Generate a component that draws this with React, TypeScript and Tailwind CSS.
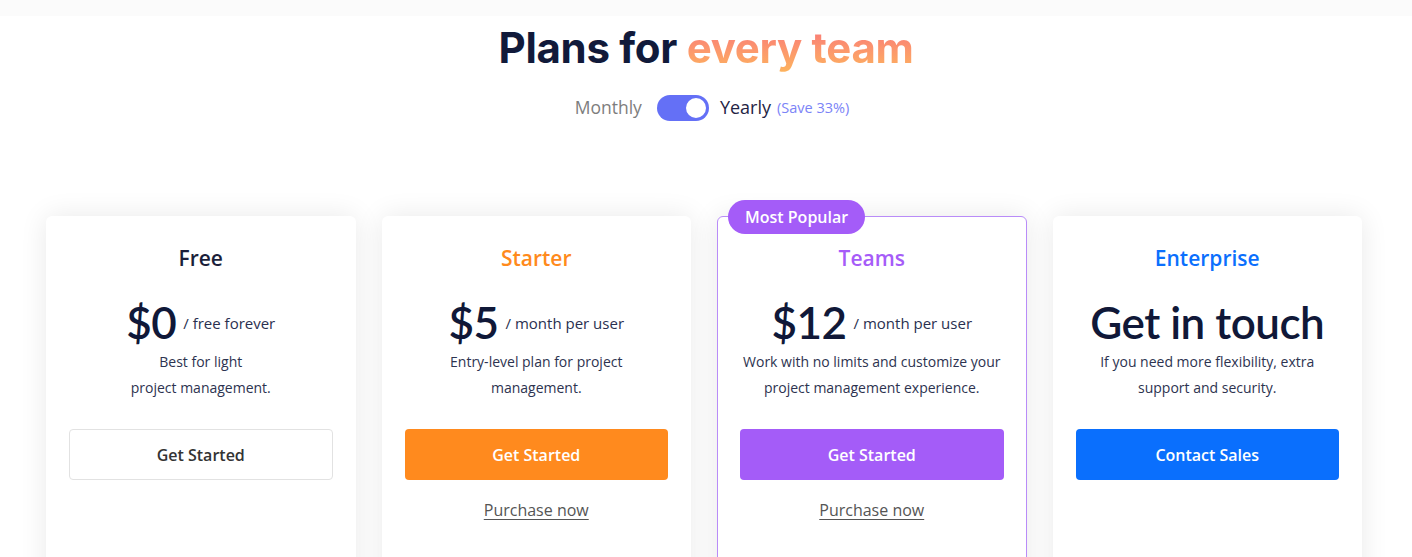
const body = "font-['Open_Sans','Lato',sans-serif]"

type Plan = {
  name: string
  nameClass: string
  price: string
  unit?: string
  desc: string[]
  cta: string
  ctaClass: string
  purchase?: boolean
  popular?: boolean
}

const plans: Plan[] = [
  {
    name: 'Free',
    nameClass: 'text-[#1b1f3b]',
    price: '$0',
    unit: '/ free forever',
    desc: ['Best for light', 'project management.'],
    cta: 'Get Started',
    ctaClass: 'border border-[#e2e2e2] bg-white text-[#333]',
  },
  {
    name: 'Starter',
    nameClass: 'text-[#ff8a1c]',
    price: '$5',
    unit: '/ month per user',
    desc: ['Entry-level plan for project', 'management.'],
    cta: 'Get Started',
    ctaClass: 'bg-[#ff8a1e] text-white',
    purchase: true,
  },
  {
    name: 'Teams',
    nameClass: 'text-[#a65cf8]',
    price: '$12',
    unit: '/ month per user',
    desc: ['Work with no limits and customize your', 'project management experience.'],
    cta: 'Get Started',
    ctaClass: 'bg-[#a45cf8] text-white',
    purchase: true,
    popular: true,
  },
  {
    name: 'Enterprise',
    nameClass: 'text-[#0b6ffd]',
    price: 'Get in touch',
    desc: ['If you need more flexibility, extra', 'support and security.'],
    cta: 'Contact Sales',
    ctaClass: 'bg-[#0a6ffd] text-white',
  },
]

function PlanCard({ plan }: { plan: Plan }) {
  return (
    <div
      className={`relative h-[380px] rounded-md bg-white px-[22px] pt-[27px] text-center shadow-[0_0_28px_rgba(0,0,0,0.09)] ${
        plan.popular ? 'border border-[#b98cf8]' : 'border border-transparent'
      }`}
    >
      {plan.popular ? (
        <div className="absolute left-[10px] top-[-17px] rounded-full bg-[#a45cf8] px-[17px] py-[5px] text-[16px] font-semibold leading-[24px] text-white">
          Most Popular
        </div>
      ) : null}
      <div className={`text-[21px] font-semibold leading-[28px] ${plan.nameClass}`}>{plan.name}</div>
      <div className="mt-[26px] flex h-[48px] items-center justify-center gap-[7px]">
        <span className="font-['Lato',sans-serif] text-[44px] font-semibold leading-none tracking-[-0.5px] text-[#101838]">
          {plan.price}
        </span>
        {plan.unit ? <span className="mt-[2px] text-[15px] text-[#2a3050]">{plan.unit}</span> : null}
      </div>
      <div className="mt-[3px] text-[14px] leading-[26px] text-[#2d3350]">
        {plan.desc.map((d) => (
          <div key={d}>{d}</div>
        ))}
      </div>
      <button
        type="button"
        className={`mt-[28px] h-[51px] w-full rounded-[4px] text-[16px] font-semibold ${plan.ctaClass}`}
      >
        {plan.cta}
      </button>
      {plan.purchase ? (
        <div className="mt-[18px] text-[16px] leading-[24px] text-[#555] underline underline-offset-[3px]">
          Purchase now
        </div>
      ) : null}
    </div>
  )
}

export default function App() {
  return (
    <div className={`h-[557px] overflow-hidden bg-white ${body}`}>
      <div className="h-[16px] bg-[#fbfbfb]" />
      <h1 className="mt-[8px] text-center font-['Inter',sans-serif] text-[42px] font-bold leading-[48px] tracking-[-0.3px] text-[#111a3a]">
        Plans for{' '}
        <span className="bg-gradient-to-b from-[#f8707a] to-[#fdb45c] bg-clip-text text-transparent">
          every team
        </span>
      </h1>
      <div className="mt-[22px] flex items-center justify-center pl-[12px]">
        <span className="text-[17.5px] text-[#7d7d7d]">Monthly</span>
        <div className="ml-[15px] flex h-[26px] w-[52px] items-center justify-end rounded-full bg-[#6470f6] pr-[1px]">
          <div className="h-[24px] w-[24px] rounded-full border-2 border-[#6470f6] bg-white" />
        </div>
        <span className="ml-[11px] text-[18px] text-[#1f2444]">Yearly</span>
        <span className="ml-[6px] mt-[1px] text-[14.5px] text-[#7b83f7]">(Save 33%)</span>
      </div>
      <div className="ml-[46px] mt-[95px] grid w-[1316px] grid-cols-4 gap-[26px]">
        {plans.map((p) => (
          <PlanCard key={p.name} plan={p} />
        ))}
      </div>
    </div>
  )
}
